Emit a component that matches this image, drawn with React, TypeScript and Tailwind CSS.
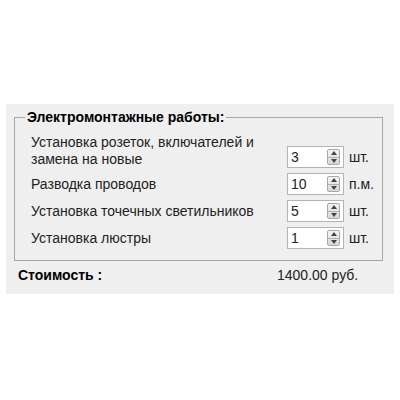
import React from 'react'

type Item = { label: string[]; value: string; unit: string }

const items: Item[] = [
  { label: ['Установка розеток, включателей и', 'замена на новые'], value: '3', unit: 'шт.' },
  { label: ['Разводка проводов'], value: '10', unit: 'п.м.' },
  { label: ['Установка точечных светильников'], value: '5', unit: 'шт.' },
  { label: ['Установка люстры'], value: '1', unit: 'шт.' },
]

function Spinner() {
  return (
    <div className="flex flex-col w-[13px] h-[16px] border border-[#a8a8a8] rounded-[2px] bg-gradient-to-b from-[#f4f4f4] to-[#d8d8d8]">
      <div className="flex-1 flex items-center justify-center border-b border-[#b0b0b0]">
        <div className="w-0 h-0 border-l-[3px] border-r-[3px] border-b-[4px] border-transparent border-b-[#444]" />
      </div>
      <div className="flex-1 flex items-center justify-center">
        <div className="w-0 h-0 border-l-[3px] border-r-[3px] border-t-[4px] border-transparent border-t-[#444]" />
      </div>
    </div>
  )
}

function NumberField({ value }: { value: string }) {
  return (
    <div className="flex items-center justify-between w-[57px] h-[22px] bg-white border border-[#b4b4b4] pl-[3px] pr-[3px]">
      <span className="text-[14px] leading-none text-[#222]">{value}</span>
      <Spinner />
    </div>
  )
}

export default function App() {
  return (
    <div className="w-[400px] h-[400px] bg-white pt-[104px] px-[6px]" style={{ fontFamily: '"Liberation Sans", Arial, sans-serif' }}>
      <div className="bg-[#efefef] pt-[6px] pb-[11px] pl-[8px] pr-[11px]">
        <fieldset className="border border-[#a6a6a6] pl-[10px] pt-[10px] pb-[11px]">
          <legend className="px-[2px] text-[14px] leading-[14px] font-bold text-black">
            Электромонтажные работы:
          </legend>
          <div className="flex flex-col gap-[5px] pl-[6px]">
            {items.map((item, i) => (
              <div key={i} className="flex items-end">
                <div className="flex-1 text-[14px] leading-[17px] text-[#222]">
                  {item.label.map((line, j) => (
                    <div key={j} className={item.label.length === 1 ? 'leading-[22px]' : ''}>{line}</div>
                  ))}
                </div>
                <NumberField value={item.value} />
                <span className="w-[38px] pl-[5px] text-[14px] leading-[22px] text-[#222]">{item.unit}</span>
              </div>
            ))}
          </div>
        </fieldset>
        <div className="flex mt-[6px] pl-[4px] text-[14px] leading-[16px]">
          <span className="w-[259px] font-bold text-black">Стоимость :</span>
          <span className="text-[#222]">1400.00 руб.</span>
        </div>
      </div>
    </div>
  )
}
